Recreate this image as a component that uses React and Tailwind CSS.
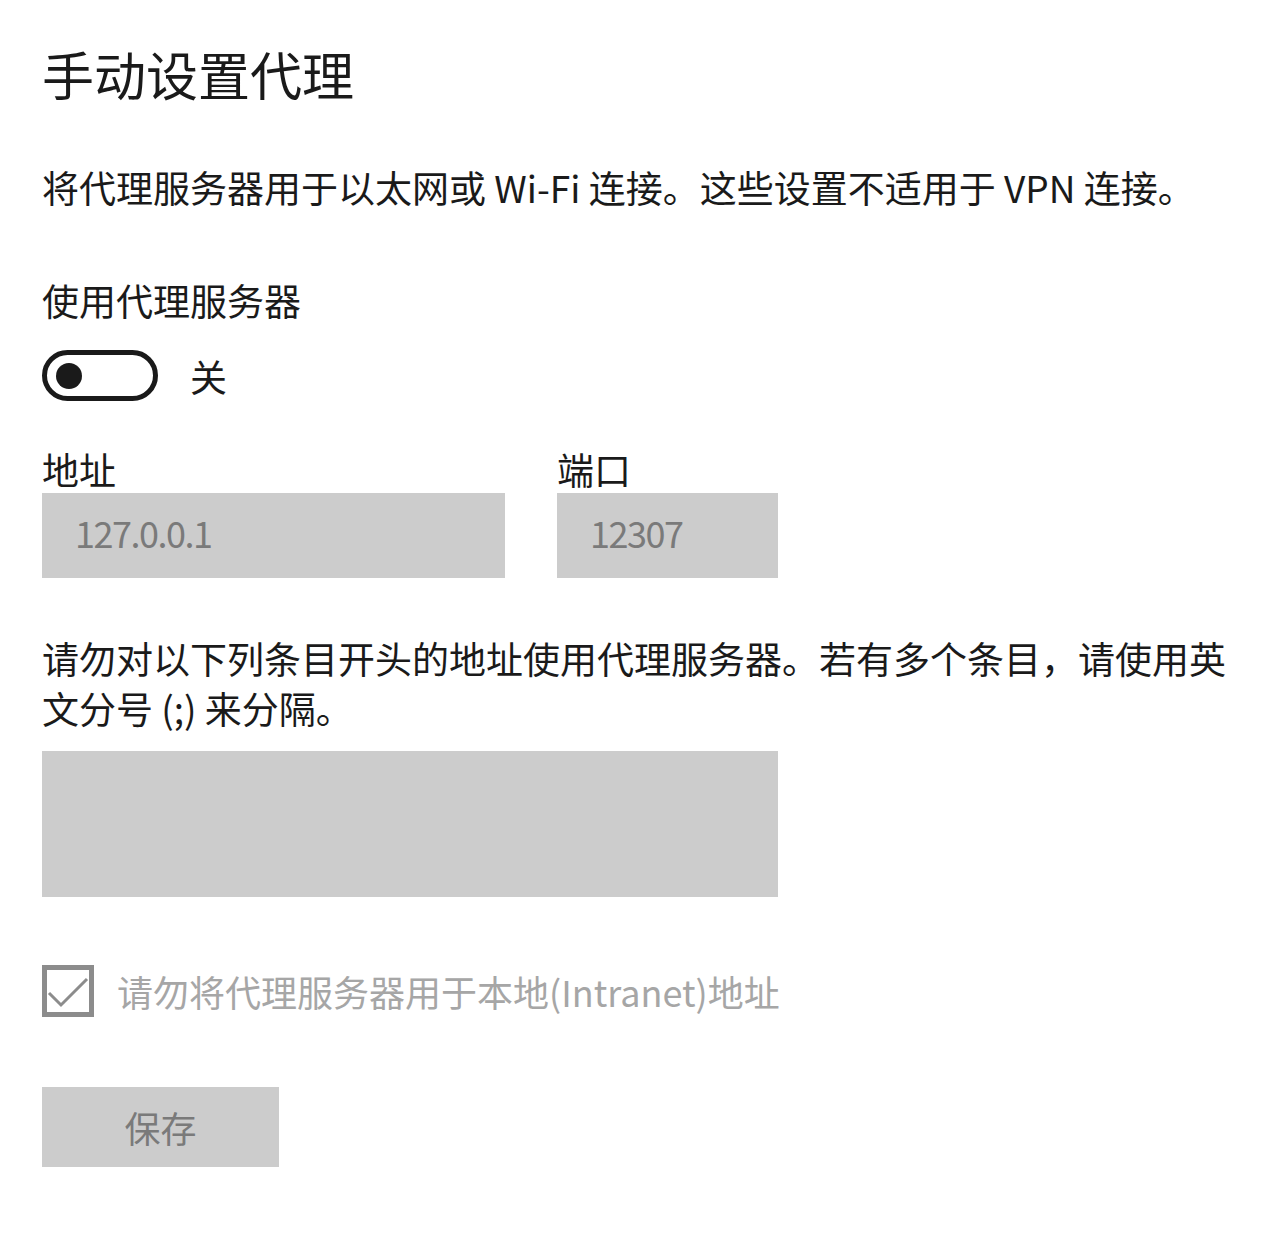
const font = { fontFamily: '"Noto Sans CJK SC", "Noto Sans", sans-serif' };

function Toggle() {
  return (
    <div className="flex h-[51px] w-[116px] items-center rounded-full border-[5px] border-[#1a1a1a] pl-[9px]">
      <div className="h-[26px] w-[26px] rounded-full bg-[#1a1a1a]" />
    </div>
  );
}

function CheckBox() {
  return (
    <svg width="52" height="52" viewBox="0 0 52 52" className="shrink-0">
      <rect x="2.5" y="2.5" width="47" height="47" fill="none" stroke="#8c8c8c" strokeWidth="5" />
      <polyline points="7,28 19,40 45,14" fill="none" stroke="#8c8c8c" strokeWidth="3" />
    </svg>
  );
}

export default function App() {
  return (
    <div className="min-h-[1244px] w-[1280px] bg-white pl-[42px] text-[#1a1a1a]" style={font}>
      <h1 className="pt-[48px] text-[52px] font-normal leading-[52px]">手动设置代理</h1>

      <p className="mt-[62px] text-[37px] leading-[50px]">
        将代理服务器用于以太网或 Wi-Fi 连接。这些设置不适用于 VPN 连接。
      </p>

      <p className="mt-[63px] text-[37px] leading-[50px]">使用代理服务器</p>

      <div className="mt-[25px] flex items-center gap-[32px]">
        <Toggle />
        <span className="text-[37px] leading-[50px]">关</span>
      </div>

      <div className="mt-[44px] flex gap-[52px]">
        <div className="flex flex-col">
          <span className="text-[37px] leading-[48px]">地址</span>
          <div className="flex h-[85px] w-[463px] items-center bg-[#cccccc] pb-[8px] pl-[33px] text-[36px] tracking-[-1.5px] text-[#7a7a7a]">
            127.0.0.1
          </div>
        </div>
        <div className="flex flex-col">
          <span className="text-[37px] leading-[48px]">端口</span>
          <div className="flex h-[85px] w-[221px] items-center bg-[#cccccc] pb-[8px] pl-[33px] text-[36px] tracking-[-1.5px] text-[#7a7a7a]">
            12307
          </div>
        </div>
      </div>

      <p className="mt-[55px] text-[37px] leading-[50px]">
        请勿对以下列条目开头的地址使用代理服务器。若有多个条目，请使用英
        <br />
        文分号 (;) 来分隔。
      </p>

      <div className="mt-[18px] h-[146px] w-[736px] bg-[#cccccc]" />

      <div className="mt-[68px] flex items-center gap-[23px]">
        <CheckBox />
        <span className="text-[36px] leading-[50px] text-[#a6a6a6]">请勿将代理服务器用于本地(Intranet)地址</span>
      </div>

      <button
        type="button"
        className="mt-[70px] flex h-[80px] w-[237px] items-center justify-center bg-[#cccccc] text-[36px] text-[#7a7a7a]"
      >
        保存
      </button>
    </div>
  );
}
